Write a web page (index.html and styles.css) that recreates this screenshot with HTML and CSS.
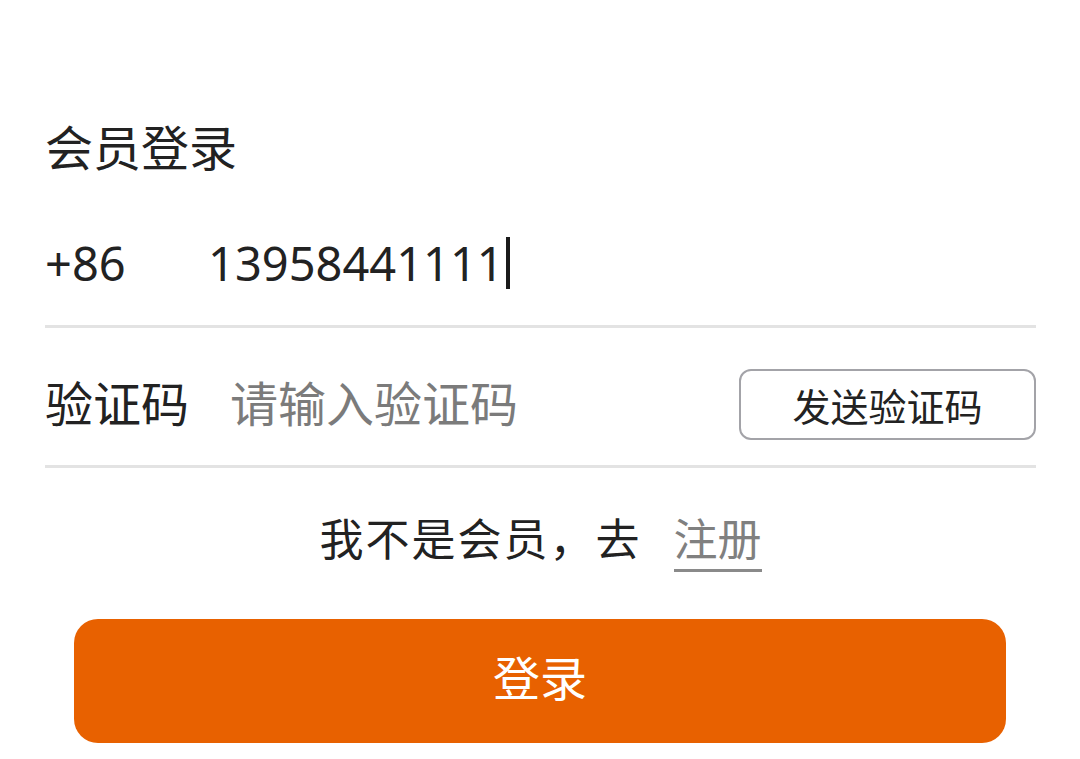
FILE: index.html
```html
<!DOCTYPE html>
<html lang="zh-CN">
<head>
    <meta charset="UTF-8">
    <meta name="viewport" content="width=device-width, initial-scale=1.0">
    <title>会员登录</title>
    <link rel="stylesheet" href="styles.css">
</head>
<body>
    <div class="page">
        <h1 class="title">会员登录</h1>

        <div class="row phone-row">
            <span class="prefix">+86</span>
            <span class="phone">13958441111<i class="caret"></i></span>
        </div>

        <div class="row code-row">
            <span class="label">验证码</span>
            <span class="placeholder">请输入验证码</span>
            <button type="button" class="send-btn">发送验证码</button>
        </div>

        <p class="register">我不是会员，去<a href="#" class="register-link">注册</a></p>

        <button type="button" class="login-btn">登录</button>
    </div>
</body>
</html>
```

FILE: styles.css
```css
/* Member login page */
body {
    margin: 0;
    padding: 0;
    background: #fff;
    color: #222;
    font-family: "Noto Sans CJK SC", "Noto Sans", sans-serif;
}

.page {
    padding: 0 44px 0 45px;
}

.title {
    margin: 0;
    padding-top: 112px;
    font-size: 48px;
    font-weight: 400;
    line-height: 66px;
}

.row {
    display: flex;
    align-items: center;
    box-sizing: border-box;
    border-bottom: 3px solid #e3e3e3;
}

.phone-row {
    height: 131px;
    margin-top: 19px;
    padding-top: 3px;
    font-family: "Noto Sans", "Noto Sans CJK SC", sans-serif;
    font-size: 47px;
}

.prefix {
    width: 163px;
}

.phone {
    display: flex;
    align-items: center;
}

.caret {
    display: inline-block;
    width: 4px;
    height: 52px;
    margin-left: 2px;
    background: #1a1a1a;
}

.code-row {
    height: 140px;
    padding-top: 16px;
    font-size: 48px;
}

.label {
    width: 185px;
    margin-bottom: 8px;
}

.placeholder {
    flex: 1;
    margin-bottom: 8px;
    color: #7b7b7b;
}

.send-btn {
    width: 297px;
    height: 71px;
    border: 2px solid #a3a3a8;
    border-radius: 12px;
    background: #fff;
    color: #222;
    font-family: inherit;
    font-size: 38px;
    padding: 0;
}

.register {
    margin: 0;
    padding-top: 36px;
    text-align: center;
    font-size: 44px;
    line-height: 66px;
    letter-spacing: 2px;
}

.register-link {
    color: #808080;
    text-decoration: none;
    letter-spacing: 0;
    border-bottom: 3px solid #8a8a8a;
    margin-left: 32px;
}

.login-btn {
    display: block;
    width: 932px;
    height: 124px;
    margin: 49px 0 0 29px;
    padding: 0 0 12px;
    border: none;
    border-radius: 24px;
    background: #e86100;
    color: #fff;
    font-family: inherit;
    font-size: 47px;
}
```
